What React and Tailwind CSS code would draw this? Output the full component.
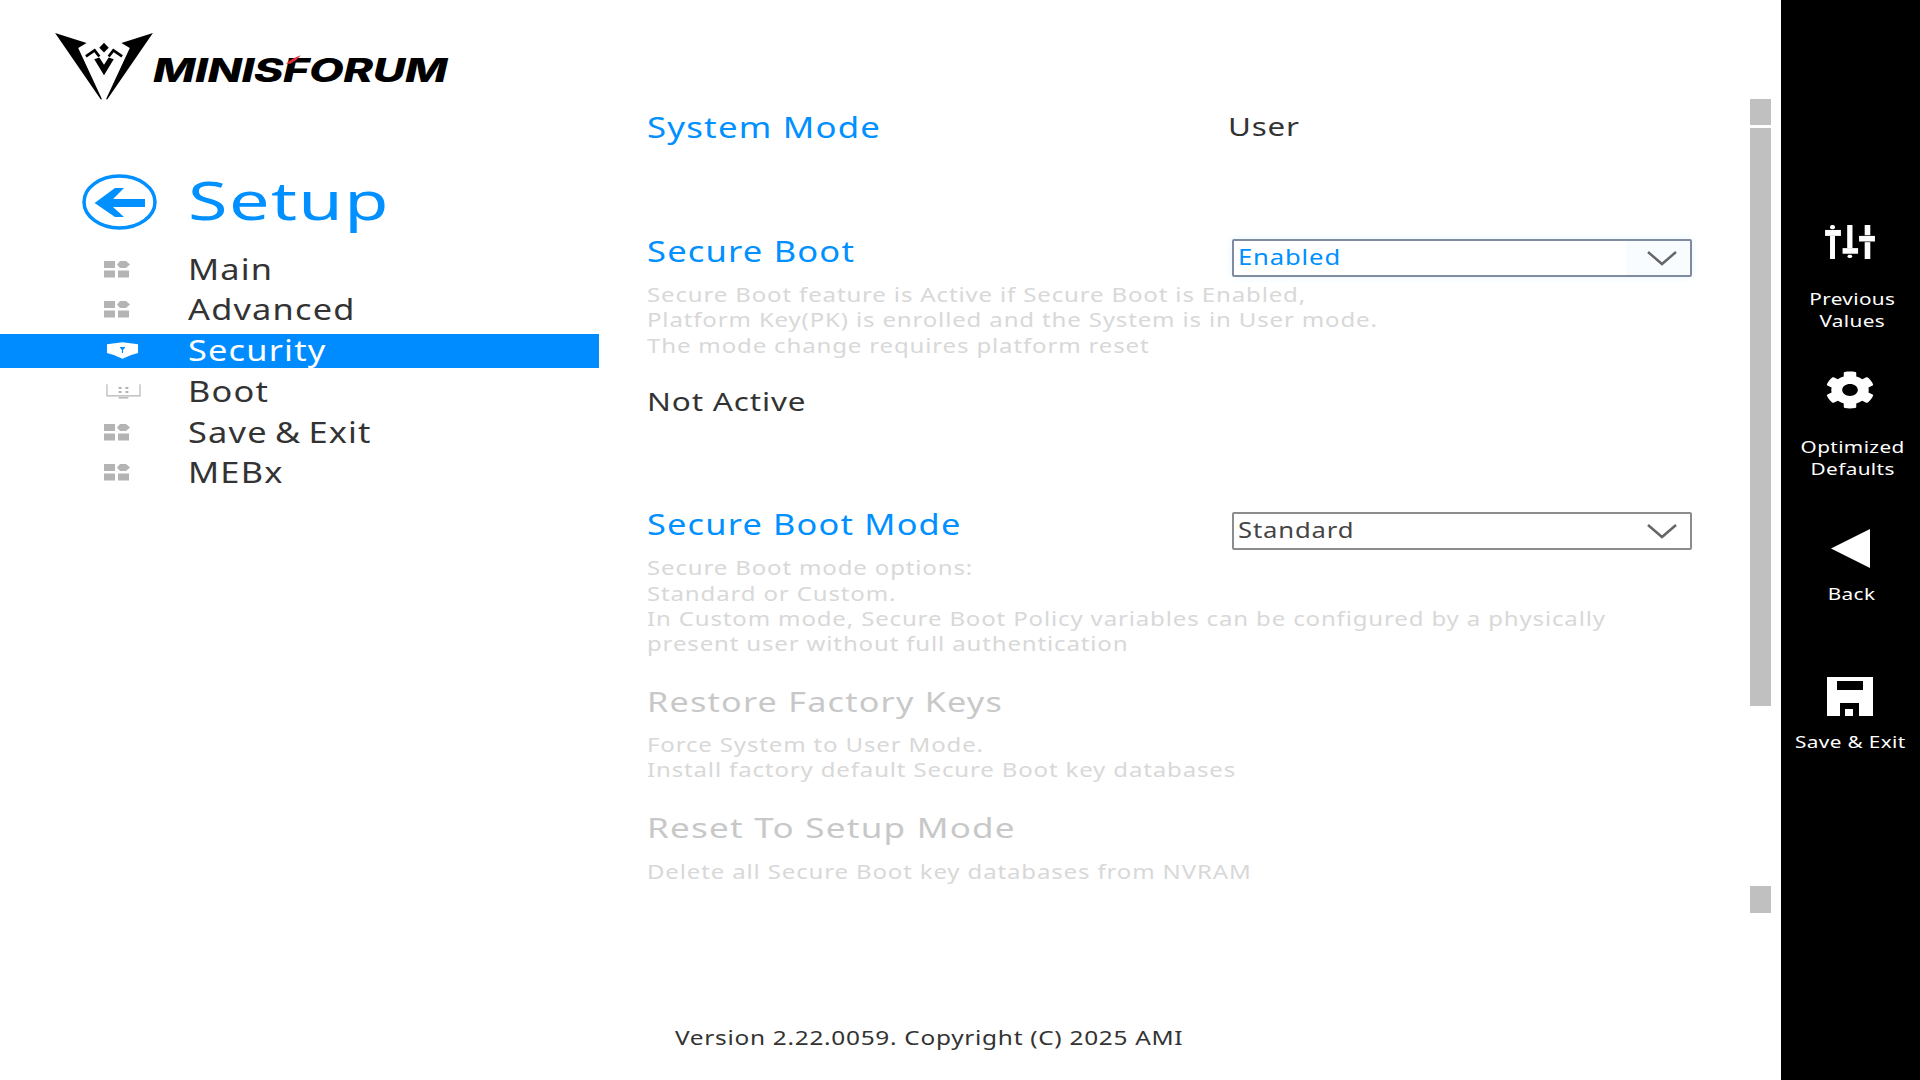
import { FaCog } from "react-icons/fa";

const menu = [
  { name: "Main", icon: "tiles" },
  { name: "Advanced", icon: "tiles" },
  { name: "Security", icon: "shield", active: true },
  { name: "Boot", icon: "boot" },
  { name: "Save & Exit", icon: "tiles" },
  { name: "MEBx", icon: "tiles" },
];

function Tiles() {
  return (
    <svg width="26" height="17" viewBox="0 0 26 17" fill="#b4b4b4">
      <rect x="0" y="0" width="11" height="7" />
      <path d="M13 3.5 L16 0 H22 L26 3.5 L22 7 H16 Z" />
      <rect x="0" y="9.5" width="11" height="7" />
      <rect x="14" y="9.5" width="11" height="7" />
    </svg>
  );
}

function Shield() {
  return (
    <svg className="ml-[2px]" width="33" height="17" viewBox="0 0 34 17">
      <path d="M1 2 L17 0 L33 2 V11 Q24 13 17 17 Q10 13 1 11 Z" fill="#fff" />
      <path d="M14 5 H20 L17.6 8 V11 H16.4 V8 Z" fill="#008cff" />
    </svg>
  );
}

function BootIcon() {
  return (
    <svg className="ml-[2px]" width="35" height="17" viewBox="0 0 36 17" fill="none" stroke="#b4b4b4">
      <path d="M1 1 V13 H35 V1" strokeWidth="1.2" />
      <path d="M13 15 H23" strokeWidth="1.5" />
      <path d="M13 5 H16 M20 5 H23 M13 9 H16 M20 9 H23" strokeWidth="1.5" stroke="#999" />
    </svg>
  );
}

function MenuIcon({ type }) {
  if (type === "shield") return <Shield />;
  if (type === "boot") return <BootIcon />;
  return <Tiles />;
}

function Logo() {
  return (
    <div className="relative flex items-start ml-[55px] mt-[33px] h-[67px]">
      <svg width="98" height="67" viewBox="48 40 292 200">
        <path d="M48 40 L142 70 L117 85 L188 238 L184 238 Z" fill="#000" />
        <path d="M340 40 L246 70 L271 85 L200 238 L204 238 Z" fill="#000" />
        <path d="M194 69 L208 84 L194 98 L180 84 Z" fill="#000" />
        <path d="M140 110 L166 92 L180 110 M248 110 L222 92 L208 110" fill="none" stroke="#000" strokeWidth="8" />
        <path d="M165 118 L180 113 L194 135 L208 113 L223 118 L194 166 Z" fill="#000" />
      </svg>
      <span className="inline-block mt-[20px] ml-[0px] text-[32px] leading-[36px] font-extrabold italic text-black tracking-[-0.3px] font-['Inter','Liberation_Sans',sans-serif] scale-x-[1.405] origin-left">
        MINISFORUM
      </span>
      <svg className="absolute left-[231px] top-[22px]" width="15" height="9" viewBox="0 0 14 8">
        <path d="M0 8 Q5 3 14 0 Q10 5 4 8 Z" fill="#e8303a" />
      </svg>
    </div>
  );
}

function Sidebar() {
  return (
    <aside className="w-[599px] shrink-0 flex flex-col">
      <Logo />
      <div className="flex items-center ml-[82px] mt-[74px] h-[56px]">
        <svg width="75" height="56" viewBox="0 0 75 56" fill="none">
          <ellipse cx="37.5" cy="28" rx="35.5" ry="26" stroke="#0090ff" strokeWidth="3.5" />
          <path d="M12.6 29 L33 14 H42 L31 25 H63 V33 H31 L42 43 H33 Z" fill="#0090ff" />
        </svg>
        <span className="inline-block -mt-[4px] ml-[31px] text-[52px] leading-[56px] text-[#0090ff] tracking-[1px] scale-x-[1.385] origin-left">
          Setup
        </span>
      </div>
      <nav className="flex flex-col gap-[6.8px] mt-[22px]">
        {menu.map((m) => (
          <div
            key={m.name}
            className={`flex items-center h-[34px] ${m.active ? "bg-[#008cff] text-white" : "text-[#333333]"}`}
          >
            <span className="w-[188px] pl-[104px] flex items-center">
              <MenuIcon type={m.icon} />
            </span>
            <span className="inline-block -mt-[1px] text-[29px] leading-[34px] tracking-[1px] [word-spacing:-2.5px] scale-x-[1.185] origin-left">
              {m.name}
            </span>
          </div>
        ))}
      </nav>
    </aside>
  );
}

function Select({ value, focused }) {
  return (
    <div
      className={`w-[460px] h-[38px] flex items-center justify-between pl-[4px] pr-[12px] border-2 rounded-[2px] ${
        focused
          ? "border-[#7f8ca0] bg-gradient-to-r from-white from-[86%] to-[#f8fcff] to-[86%] text-[#0090ff] shadow-[0_0_8px_#e6f5ff]"
          : "border-[#8c8c8c] bg-white text-[#444444]"
      }`}
    >
      <span className="inline-block -mt-[2px] text-[21px] leading-[34px] tracking-[0.7px] scale-x-[1.22] origin-left">{value}</span>
      <svg width="32" height="16" viewBox="0 0 32 16" fill="none">
        <path d="M2 2 L16 14 L30 2" stroke="#666666" strokeWidth="2.5" />
      </svg>
    </div>
  );
}

function Desc({ lines, className }) {
  return (
    <div className={`text-[#d8d8d8] text-[19.5px] leading-[25.4px] tracking-[0.7px] ${className}`}>
      {lines.map((l) => (
        <div key={l} className="scale-x-[1.23] origin-left whitespace-nowrap">
          {l}
        </div>
      ))}
    </div>
  );
}

function Main() {
  const label = "inline-block text-[29px] leading-[24px] text-[#0090ff] tracking-[1px] origin-left";
  return (
    <main className="flex-1 flex flex-col pl-[48px] pt-[108px] pb-[30px]">
      <div className="flex h-[40px] items-center">
        <span className="w-[581px]">
          <span className={`${label} mt-[2px] scale-x-[1.2]`}>System Mode</span>
        </span>
        <span className="inline-block text-[26px] leading-[32px] text-[#333333] tracking-[0.7px] -mt-[4px] scale-x-[1.205] origin-left">
          User
        </span>
      </div>

      <div className="flex h-[38px] mt-[91px]">
        <span className="w-[585px]">
          <span className={`${label} scale-x-[1.19]`}>Secure Boot</span>
        </span>
        <Select value="Enabled" focused />
      </div>
      <Desc
        className="mt-[5px]"
        lines={[
          "Secure Boot feature is Active if Secure Boot is Enabled,",
          "Platform Key(PK) is enrolled and the System is in User mode.",
          "The mode change requires platform reset",
        ]}
      />
      <div className="mt-[27px] h-[33px] text-[26px] leading-[32px] text-[#333333] tracking-[0.7px] scale-x-[1.21] origin-left">
        Not Active
      </div>

      <div className="flex h-[38px] mt-[94px]">
        <span className="w-[585px]">
          <span className={`${label} scale-x-[1.185]`}>Secure Boot Mode</span>
        </span>
        <Select value="Standard" />
      </div>
      <Desc
        className="mt-[5px]"
        lines={[
          "Secure Boot mode options:",
          "Standard or Custom.",
          "In Custom mode, Secure Boot Policy variables can be configured by a physically",
          "present user without full authentication",
        ]}
      />
      <div className="mt-[28px] h-[33px] text-[28px] leading-[32px] text-[#c8c8c8] tracking-[1px] scale-x-[1.22] origin-left">
        Restore Factory Keys
      </div>
      <Desc
        className="mt-[14px]"
        lines={["Force System to User Mode.", "Install factory default Secure Boot key databases"]}
      />
      <div className="mt-[28px] h-[33px] text-[28px] leading-[32px] text-[#c8c8c8] tracking-[1px] scale-x-[1.25] origin-left">
        Reset To Setup Mode
      </div>
      <Desc className="mt-[15px]" lines={["Delete all Secure Boot key databases from NVRAM"]} />

      <div className="mt-auto pl-[28px] h-[26px] text-[20.5px] leading-[26px] text-[#333333] tracking-[0.6px]">
        <span className="inline-block scale-x-[1.19] origin-left">Version 2.22.0059. Copyright (C) 2025 AMI</span>
      </div>
    </main>
  );
}

function Scrollbar() {
  return (
    <div className="w-[21px] shrink-0 flex flex-col pt-[99px] mr-[10px]">
      <div className="h-[26px] bg-[#c0c0c0]" />
      <div className="h-[578px] mt-[3px] bg-[#c0c0c0]" />
      <div className="h-[27px] mt-[180px] bg-[#c0c0c0]" />
    </div>
  );
}

function SideLabel({ children, className }) {
  return (
    <div className={`text-white text-[17px] leading-[22px] tracking-[0.3px] text-center scale-x-[1.22] ${className}`}>
      {children}
    </div>
  );
}

function Actions() {
  return (
    <aside className="w-[139px] shrink-0 bg-black flex flex-col items-center pt-[225px]">
      <svg className="-ml-[1px]" width="50" height="34" viewBox="75 45 151 103" fill="#fff">
        <rect x="90" y="45" width="15" height="13" rx="6" />
        <rect x="75" y="60" width="48" height="18" />
        <rect x="90" y="78" width="15" height="70" />
        <rect x="142" y="45" width="16" height="70" />
        <rect x="128" y="115" width="47" height="17" />
        <rect x="143" y="135" width="14" height="10" rx="5" />
        <rect x="195" y="45" width="17" height="31" />
        <rect x="178" y="78" width="48" height="17" />
        <rect x="195" y="97" width="17" height="51" />
      </svg>
      <SideLabel className="mt-[29px] ml-[4px]">
        Previous
        <br />
        Values
      </SideLabel>
      <FaCog className="mt-[39px] -ml-[1px] w-[50px] h-[38px] text-white" preserveAspectRatio="none" />
      <SideLabel className="mt-[27px] ml-[4px]">
        Optimized
        <br />
        Defaults
      </SideLabel>
      <svg className="mt-[49px] -ml-[1px]" width="39" height="39" viewBox="0 0 39 39" fill="#fff">
        <path d="M0 19.5 L39 0 V39 Z" />
      </svg>
      <SideLabel className="mt-[15px] ml-[2px]">Back</SideLabel>
      <svg className="mt-[72px] -ml-[2px]" width="46" height="39" viewBox="0 0 46 39" fill="#fff" fillRule="evenodd">
        <path d="M0 0 H46 V39 H32 V26 H13 V39 H0 Z M10 4 V13 H36 V4 Z" />
        <rect x="18" y="32" width="8" height="7" />
      </svg>
      <SideLabel className="mt-[15px] -ml-[1px]">Save &amp; Exit</SideLabel>
    </aside>
  );
}

export default function App() {
  return (
    <div className="w-[1920px] h-[1080px] flex bg-white overflow-hidden font-['Noto_Sans','DejaVu_Sans',sans-serif]">
      <Sidebar />
      <Main />
      <Scrollbar />
      <Actions />
    </div>
  );
}
